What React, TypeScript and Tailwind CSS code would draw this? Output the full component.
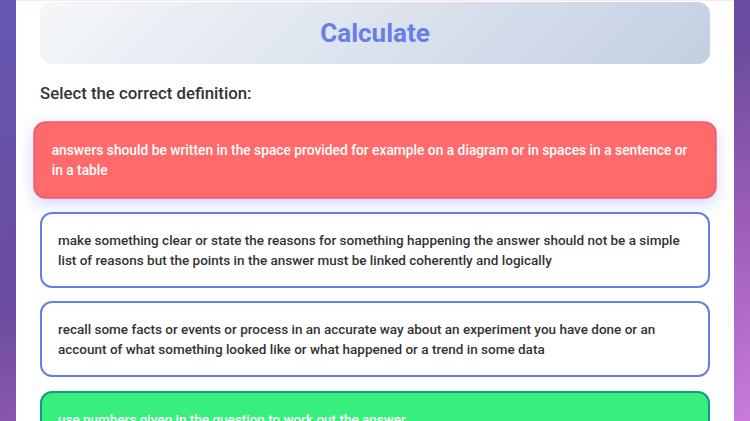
import React from 'react';

type Option = { text: string; state: 'wrong' | 'right' | 'idle' };

const options: Option[] = [
  {
    text: 'answers should be written in the space provided for example on a diagram or in spaces in a sentence or in a table',
    state: 'wrong',
  },
  {
    text: 'make something clear or state the reasons for something happening the answer should not be a simple list of reasons but the points in the answer must be linked coherently and logically',
    state: 'idle',
  },
  {
    text: 'recall some facts or events or process in an accurate way about an experiment you have done or an account of what something looked like or what happened or a trend in some data',
    state: 'idle',
  },
  { text: 'use numbers given in the question to work out the answer', state: 'right' },
];

const OptionCard: React.FC<{ option: Option }> = ({ option }) => {
  const base = 'rounded-xl border-2 px-4 py-4 text-[13.5px] leading-5 font-medium';
  if (option.state === 'wrong') {
    return (
      <div
        className={`${base} border-[#ee5f74] bg-[#ff6b6b] text-white scale-[1.02] shadow-[0_5px_15px_rgba(102,126,234,0.3)]`}
      >
        {option.text}
      </div>
    );
  }
  if (option.state === 'right') {
    return <div className={`${base} border-[#11998e] bg-[#38ef7d] text-white`}>{option.text}</div>;
  }
  return <div className={`${base} border-[#667eea] bg-white text-[#333]`}>{option.text}</div>;
};

export default function App() {
  return (
    <div
      className="h-[421px] w-[750px] overflow-hidden px-4 bg-[linear-gradient(160deg,#6557b1_0%,#6b4ca0_45%,#9a5db5_70%,#c97bd9_100%)]"
      style={{ fontFamily: 'Roboto, "Noto Sans", sans-serif' }}
    >
      <div className="h-full bg-white border-t border-[#fde9ea] px-6">
        <div className="mt-px flex h-[62px] items-center justify-center rounded-xl bg-[linear-gradient(135deg,#f5f7fa_0%,#c3cfe2_100%)]">
          <h1 className="text-[26px] font-bold text-[#667eea]">Calculate</h1>
        </div>
        <h2 className="mt-[17px] mb-[17px] text-[16.8px] leading-6 font-medium text-[#333]">
          Select the correct definition:
        </h2>
        <div className="flex flex-col gap-[13.5px]">
          {options.map((o, i) => (
            <OptionCard key={i} option={o} />
          ))}
        </div>
      </div>
    </div>
  );
}
